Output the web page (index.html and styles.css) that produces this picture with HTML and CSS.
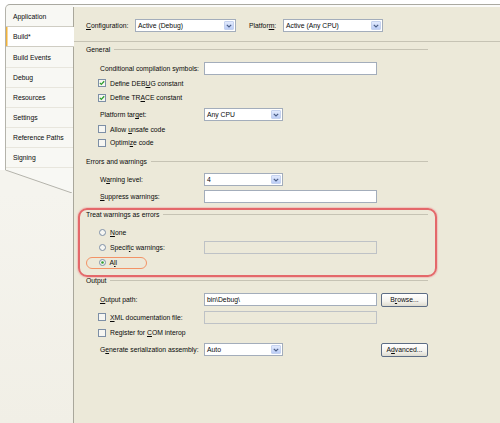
FILE: index.html
```html
<!DOCTYPE html>
<html>
<head>
<meta charset="utf-8">
<title>Build</title>
<link rel="stylesheet" href="styles.css">
</head>
<body>
<div class="window">
  <div class="side">
    <div class="tablist">
      <div class="tab before-sel">Application</div>
      <div class="tab sel">Build*</div>
      <div class="tab">Build Events</div>
      <div class="tab">Debug</div>
      <div class="tab">Resources</div>
      <div class="tab">Settings</div>
      <div class="tab">Reference Paths</div>
      <div class="tab">Signing</div>
    </div>
    <svg class="tail" width="73" height="23" viewBox="0 0 73 23"><path d="M5 0 H73 V23 H72 Z" fill="#f8f8f4"/><path d="M5.5 0 L72 23" stroke="#b4b3ab" stroke-width="1" fill="none"/></svg>
    <div class="sidefill"></div>
  </div>

  <div class="main">
    <div class="panel">
      <div class="topbar">
        <span class="lbl cfg"><u>C</u>onfiguration:</span>
        <div class="combo w-cfg"><span>Active (Debug)</span><span class="drop"><svg width="6" height="4" viewBox="0 0 6 4"><path d="M0.8 0.8 L3 3 L5.2 0.8" stroke="#4a5e86" stroke-width="1.2" fill="none"/></svg></span></div>
        <span class="lbl plat">Platfor<u>m</u>:</span>
        <div class="combo w-plat"><span>Active (Any CPU)</span><span class="drop"><svg width="6" height="4" viewBox="0 0 6 4"><path d="M0.8 0.8 L3 3 L5.2 0.8" stroke="#4a5e86" stroke-width="1.2" fill="none"/></svg></span></div>
      </div>

      <section class="group g-general">
        <div class="ghead"><span>General</span></div>
        <div class="form f-general">
          <span class="lbl flbl">Conditional compilation symbols:</span>
          <div class="text"></div>
          <div class="opt wide"><svg class="box" width="8" height="8" viewBox="0 0 8 8"><rect x="0.5" y="0.5" width="7" height="7" fill="#f6f6f2" stroke="#7d8fa6"/><path d="M1.9 3.9 L3.3 5.4 L6.2 2.2" stroke="#2e9e2e" stroke-width="1.3" fill="none"/></svg><span>Define DEB<u>U</u>G constant</span></div>
          <div class="opt wide"><svg class="box" width="8" height="8" viewBox="0 0 8 8"><rect x="0.5" y="0.5" width="7" height="7" fill="#f6f6f2" stroke="#7d8fa6"/><path d="M1.9 3.9 L3.3 5.4 L6.2 2.2" stroke="#2e9e2e" stroke-width="1.3" fill="none"/></svg><span>Define TR<u>A</u>CE constant</span></div>
          <span class="lbl flbl">Platform tar<u>g</u>et:</span>
          <div class="combo w-sm"><span>Any CPU</span><span class="drop"><svg width="6" height="4" viewBox="0 0 6 4"><path d="M0.8 0.8 L3 3 L5.2 0.8" stroke="#4a5e86" stroke-width="1.2" fill="none"/></svg></span></div>
          <div class="opt wide"><svg class="box" width="8" height="8" viewBox="0 0 8 8"><rect x="0.5" y="0.5" width="7" height="7" fill="#f6f6f2" stroke="#7d8fa6"/></svg><span>Allow <u>u</u>nsafe code</span></div>
          <div class="opt wide"><svg class="box" width="8" height="8" viewBox="0 0 8 8"><rect x="0.5" y="0.5" width="7" height="7" fill="#f6f6f2" stroke="#7d8fa6"/></svg><span>Optimi<u>z</u>e code</span></div>
        </div>
      </section>

      <section class="group g-errors">
        <div class="ghead"><span>Errors and warnings</span></div>
        <div class="form f-errors">
          <span class="lbl flbl">W<u>a</u>rning level:</span>
          <div class="combo w-sm"><span>4</span><span class="drop"><svg width="6" height="4" viewBox="0 0 6 4"><path d="M0.8 0.8 L3 3 L5.2 0.8" stroke="#4a5e86" stroke-width="1.2" fill="none"/></svg></span></div>
          <span class="lbl flbl"><u>S</u>uppress warnings:</span>
          <div class="text"></div>
        </div>
      </section>

      <section class="group callout">
        <div class="ghead"><span>Treat warnings as errors</span></div>
        <div class="form f-treat">
          <div class="opt"><svg class="radio" width="7" height="7" viewBox="0 0 7 7"><circle cx="3.5" cy="3.5" r="3" fill="#f6f6f2" stroke="#7d8fa6"/></svg><span><u>N</u>one</span></div>
          <div class="opt"><svg class="radio" width="7" height="7" viewBox="0 0 7 7"><circle cx="3.5" cy="3.5" r="3" fill="#f6f6f2" stroke="#7d8fa6"/></svg><span>Specif<u>i</u>c warnings:</span></div>
          <div class="text dis"></div>
          <div class="opt hl"><svg class="radio" width="7" height="7" viewBox="0 0 7 7"><circle cx="3.5" cy="3.5" r="3" fill="#f6f6f2" stroke="#7d8fa6"/><circle cx="3.5" cy="3.5" r="1.3" fill="#2e9e2e"/></svg><span>A<u>l</u>l</span></div>
        </div>
      </section>

      <section class="group g-output">
        <div class="ghead"><span>Output</span></div>
        <div class="form f-output">
          <span class="lbl flbl"><u>O</u>utput path:</span>
          <div class="text"><span>bin\Debug\</span></div>
          <div class="btn">B<u>r</u>owse...</div>
          <div class="opt"><svg class="box" width="8" height="8" viewBox="0 0 8 8"><rect x="0.5" y="0.5" width="7" height="7" fill="#f6f6f2" stroke="#7d8fa6"/></svg><span><u>X</u>ML documentation file:</span></div>
          <div class="text dis"></div>
          <div class="opt wide"><svg class="box" width="8" height="8" viewBox="0 0 8 8"><rect x="0.5" y="0.5" width="7" height="7" fill="#f6f6f2" stroke="#7d8fa6"/></svg><span>Register for <u>C</u>OM interop</span></div>
          <span class="lbl flbl">G<u>e</u>nerate serialization assembly:</span>
          <div class="combo w-sm"><span>Auto</span><span class="drop"><svg width="6" height="4" viewBox="0 0 6 4"><path d="M0.8 0.8 L3 3 L5.2 0.8" stroke="#4a5e86" stroke-width="1.2" fill="none"/></svg></span></div>
          <div class="btn adv">A<u>d</u>vanced...</div>
        </div>
      </section>
    </div>
  </div>
</div>
</body>
</html>
```

FILE: styles.css
```css
* { box-sizing: border-box; }
html, body { margin: 0; padding: 0; }
body {
  width: 500px;
  height: 423px;
  overflow: hidden;
  background: #ffffff;
  font-family: "Liberation Sans", Arial, sans-serif;
  font-size: 6.8px;
  color: #0a0a0a;
}
u { text-decoration-thickness: 0.6px; text-underline-offset: 1px; }

.window { display: flex; height: 423px; padding-top: 4px; }

/* ---------- left tab strip ---------- */
.side { width: 73px; display: flex; flex-direction: column; }
.tablist {
  margin-left: 5px;
  border-top: 1px solid #aaa9a1;
  border-left: 1px solid #b4b3ab;
  border-top-left-radius: 5px;
  background: #f8f8f4;
  padding-top: 2.3px;
  padding-bottom: 1.9px;
}
.tab {
  height: 20.1px;
  display: flex;
  align-items: center;
  padding-left: 7px;
  border-bottom: 1px solid #e8e6dd;
  white-space: nowrap;
}
.tab.before-sel { border-bottom-color: #cfcdc3; }
.tab.sel {
  background: #ffffff;
  margin-right: -1px;
  position: relative;
  z-index: 1;
  border-bottom-color: #cfcdc3;
  box-shadow: inset 1.5px 0 0 #f0b23a;
}
.tail { display: block; background: #f5f4ee; }
.sidefill { flex: 1; background: linear-gradient(#f5f4ee, #f1efe6); }

/* ---------- main panel ---------- */
.main {
  flex: 1;
  border-top: 1px solid #aaa9a1;
  padding-top: 2px;
  display: flex;
  flex-direction: column;
  background: #fbfbf9;
}
.panel {
  flex: 1;
  background: #ece9d9;
  border-left: 1px solid #a9a79b;
  display: flex;
  flex-direction: column;
}

.topbar {
  height: 35px;
  padding: 12px 0 0 12px;
  display: flex;
  align-items: flex-start;
  border-bottom: 1px solid #c6c3b4;
}
.topbar .lbl { height: 13px; display: flex; align-items: center; }
.cfg { width: 49px; }
.plat { width: 34px; margin-left: 13px; }
.w-cfg { width: 101px; }
.w-plat { width: 100px; }

.lbl { white-space: nowrap; }

/* ---------- controls ---------- */
.combo, .text {
  height: 13px;
  border: 1px solid #a3adbb;
  background: #ffffff;
  display: flex;
  align-items: center;
  padding-left: 2px;
  white-space: nowrap;
}
.combo { padding-right: 1px; }
.combo .drop {
  margin-left: auto;
  width: 10px;
  height: 9px;
  border-radius: 1px;
  background: linear-gradient(#e2eafd, #bccdf6);
  border: 1px solid #c5d2ef;
  display: flex;
  align-items: center;
  justify-content: center;
}
.w-sm { width: 79px; justify-self: start; }
.text.dis { background: transparent; border-color: #bec2c6; }

.btn {
  height: 14px;
  border: 1px solid #5d6d85;
  border-radius: 2px;
  background: linear-gradient(#ffffff, #f4f3ee 60%, #dedbcf);
  display: flex;
  align-items: center;
  justify-content: center;
  white-space: nowrap;
}

/* ---------- groups ---------- */
.group { padding: 0 72px 0 12px; }
.ghead {
  height: 9px;
  display: flex;
  align-items: center;
  gap: 4px;
  white-space: nowrap;
}
.ghead::after {
  content: "";
  flex: 1;
  border-top: 1px solid #c6c3b4;
}
.g-general { margin-top: 3px; }
.g-errors { margin-top: 7px; }
.g-output { margin-top: -1px; }

.callout {
  margin: 3px 0 0 4px;
  width: 359px;
  padding: 0 7px 5px 6px;
  border: 2px solid #e4686a;
  border-radius: 9px;
  box-shadow: 0 0 1px 1px rgba(240, 165, 165, 0.55);
}

.form {
  margin-left: 12px;
  margin-top: 5px;
  display: grid;
  grid-template-columns: 102px 173px 47px;
  column-gap: 4px;
  align-items: center;
}
.f-general { grid-template-rows: 18px 12px 17px 17px 12px 15px; }
.f-errors { grid-template-rows: 17px 17px; }
.f-treat { margin-top: 6px; grid-template-rows: 15px 15px 15px; }
.f-output { margin-top: 6px; grid-template-rows: 17px 18px 13px 21px 30px; }

.flbl { padding-left: 2px; grid-column: 1; }

.opt {
  display: flex;
  align-items: center;
  gap: 4px;
  white-space: nowrap;
  grid-column: 1;
}
.opt.wide { grid-column: 1 / -1; }
.opt .box { display: block; flex: none; }
.opt .radio { display: block; flex: none; margin-left: 1px; }

.opt.hl {
  grid-column: 1 / -1;
  justify-self: start;
  margin-left: -12.5px;
  padding-left: 11px;
  width: 61px;
  height: 12px;
  border: 1.5px solid #f39366;
  border-radius: 7px;
}

.adv { grid-column: 3; }
```
